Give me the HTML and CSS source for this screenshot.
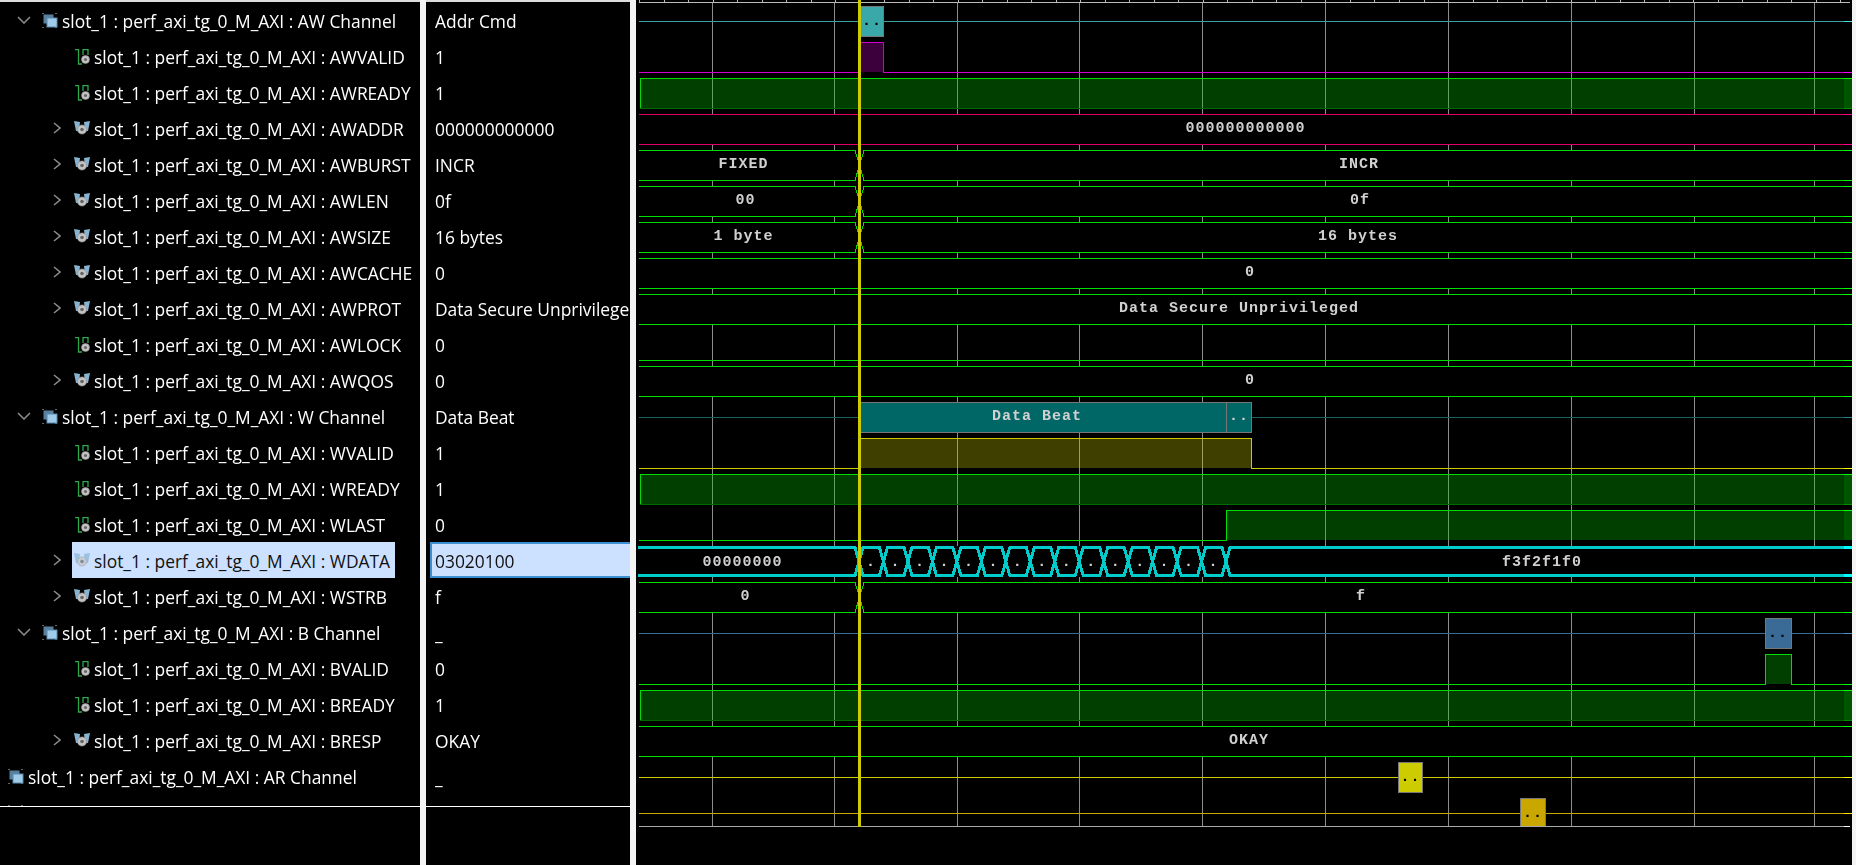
FILE: index.html

```html
<!DOCTYPE html>
<html>
<head>
    <meta charset="UTF-8">
    <title>Waveform - perf_axi_tg_0_M_AXI</title>
    <link rel="stylesheet" href="styles.css">
</head>
<body>
    <!-- icons used by the tree -->
    <svg class="defs">
        <symbol id="i-group" viewBox="0 0 16 16">
            <path class="i-dots" d="M0 0h2v1h-2zM13 0h2v1h-2zM0 14h2v1h-2zM13 14h2v1h-2z"/>
            <rect class="i-back" x="1.5" y="1.5" width="10" height="9"/>
            <rect class="i-front" x="5" y="5" width="10" height="9"/>
        </symbol>
        <symbol id="i-bit" viewBox="0 0 16 16">
            <path class="i-step" d="M1 .5H4.5V15H8M9 6V.5H14V6"/>
            <circle class="i-ring" cx="11.5" cy="10.5" r="4"/>
            <circle class="i-hole" cx="11.5" cy="10.5" r="1.6"/>
        </symbol>
        <symbol id="i-bus" viewBox="0 0 16 16">
            <path class="i-wing" d="M0 0L6 1L5 10L2 10ZM16 0L10 1L11 10L14 10Z"/>
            <circle class="i-ring" cx="8" cy="8.5" r="4.6"/>
            <circle class="i-hole" cx="8" cy="8.5" r="1.8"/>
        </symbol>
        <symbol id="i-right" viewBox="0 0 8 12">
            <path class="i-chev" d="M1 1L7 6L1 11"/>
        </symbol>
        <symbol id="i-down" viewBox="0 0 14 8">
            <path class="i-chev" d="M1 1L7 7L13 1"/>
        </symbol>
    </svg>

    <div class="names">
        <div class="row group"><span class="twisty"><svg class="chev-down"><use href="#i-down"/></svg></span><span class="node"><svg class="ico"><use href="#i-group"/></svg><span>slot_1 : perf_axi_tg_0_M_AXI : AW Channel</span></span></div>
        <div class="row child"><span class="twisty"></span><span class="node"><svg class="ico"><use href="#i-bit"/></svg><span>slot_1 : perf_axi_tg_0_M_AXI : AWVALID</span></span></div>
        <div class="row child"><span class="twisty"></span><span class="node"><svg class="ico"><use href="#i-bit"/></svg><span>slot_1 : perf_axi_tg_0_M_AXI : AWREADY</span></span></div>
        <div class="row child"><span class="twisty"><svg class="chev-right"><use href="#i-right"/></svg></span><span class="node"><svg class="ico"><use href="#i-bus"/></svg><span>slot_1 : perf_axi_tg_0_M_AXI : AWADDR</span></span></div>
        <div class="row child"><span class="twisty"><svg class="chev-right"><use href="#i-right"/></svg></span><span class="node"><svg class="ico"><use href="#i-bus"/></svg><span>slot_1 : perf_axi_tg_0_M_AXI : AWBURST</span></span></div>
        <div class="row child"><span class="twisty"><svg class="chev-right"><use href="#i-right"/></svg></span><span class="node"><svg class="ico"><use href="#i-bus"/></svg><span>slot_1 : perf_axi_tg_0_M_AXI : AWLEN</span></span></div>
        <div class="row child"><span class="twisty"><svg class="chev-right"><use href="#i-right"/></svg></span><span class="node"><svg class="ico"><use href="#i-bus"/></svg><span>slot_1 : perf_axi_tg_0_M_AXI : AWSIZE</span></span></div>
        <div class="row child"><span class="twisty"><svg class="chev-right"><use href="#i-right"/></svg></span><span class="node"><svg class="ico"><use href="#i-bus"/></svg><span>slot_1 : perf_axi_tg_0_M_AXI : AWCACHE</span></span></div>
        <div class="row child"><span class="twisty"><svg class="chev-right"><use href="#i-right"/></svg></span><span class="node"><svg class="ico"><use href="#i-bus"/></svg><span>slot_1 : perf_axi_tg_0_M_AXI : AWPROT</span></span></div>
        <div class="row child"><span class="twisty"></span><span class="node"><svg class="ico"><use href="#i-bit"/></svg><span>slot_1 : perf_axi_tg_0_M_AXI : AWLOCK</span></span></div>
        <div class="row child"><span class="twisty"><svg class="chev-right"><use href="#i-right"/></svg></span><span class="node"><svg class="ico"><use href="#i-bus"/></svg><span>slot_1 : perf_axi_tg_0_M_AXI : AWQOS</span></span></div>
        <div class="row group"><span class="twisty"><svg class="chev-down"><use href="#i-down"/></svg></span><span class="node"><svg class="ico"><use href="#i-group"/></svg><span>slot_1 : perf_axi_tg_0_M_AXI : W Channel</span></span></div>
        <div class="row child"><span class="twisty"></span><span class="node"><svg class="ico"><use href="#i-bit"/></svg><span>slot_1 : perf_axi_tg_0_M_AXI : WVALID</span></span></div>
        <div class="row child"><span class="twisty"></span><span class="node"><svg class="ico"><use href="#i-bit"/></svg><span>slot_1 : perf_axi_tg_0_M_AXI : WREADY</span></span></div>
        <div class="row child"><span class="twisty"></span><span class="node"><svg class="ico"><use href="#i-bit"/></svg><span>slot_1 : perf_axi_tg_0_M_AXI : WLAST</span></span></div>
        <div class="row child selected"><span class="twisty"><svg class="chev-right"><use href="#i-right"/></svg></span><span class="node"><svg class="ico"><use href="#i-bus"/></svg><span>slot_1 : perf_axi_tg_0_M_AXI : WDATA</span></span></div>
        <div class="row child"><span class="twisty"><svg class="chev-right"><use href="#i-right"/></svg></span><span class="node"><svg class="ico"><use href="#i-bus"/></svg><span>slot_1 : perf_axi_tg_0_M_AXI : WSTRB</span></span></div>
        <div class="row group"><span class="twisty"><svg class="chev-down"><use href="#i-down"/></svg></span><span class="node"><svg class="ico"><use href="#i-group"/></svg><span>slot_1 : perf_axi_tg_0_M_AXI : B Channel</span></span></div>
        <div class="row child"><span class="twisty"></span><span class="node"><svg class="ico"><use href="#i-bit"/></svg><span>slot_1 : perf_axi_tg_0_M_AXI : BVALID</span></span></div>
        <div class="row child"><span class="twisty"></span><span class="node"><svg class="ico"><use href="#i-bit"/></svg><span>slot_1 : perf_axi_tg_0_M_AXI : BREADY</span></span></div>
        <div class="row child"><span class="twisty"><svg class="chev-right"><use href="#i-right"/></svg></span><span class="node"><svg class="ico"><use href="#i-bus"/></svg><span>slot_1 : perf_axi_tg_0_M_AXI : BRESP</span></span></div>
        <div class="row root"><span class="node"><svg class="ico"><use href="#i-group"/></svg><span>slot_1 : perf_axi_tg_0_M_AXI : AR Channel</span></span></div>
        <div class="row root"><span class="node"><svg class="ico"><use href="#i-group"/></svg></span></div>
    </div>

    <div class="values">
        <div class="val">Addr Cmd</div>
        <div class="val">1</div>
        <div class="val">1</div>
        <div class="val">000000000000</div>
        <div class="val">INCR</div>
        <div class="val">0f</div>
        <div class="val">16 bytes</div>
        <div class="val">0</div>
        <div class="val">Data Secure Unprivileged</div>
        <div class="val">0</div>
        <div class="val">0</div>
        <div class="val">Data Beat</div>
        <div class="val">1</div>
        <div class="val">1</div>
        <div class="val">0</div>
        <div class="val selected">03020100</div>
        <div class="val">f</div>
        <div class="val">_</div>
        <div class="val">0</div>
        <div class="val">1</div>
        <div class="val">OKAY</div>
        <div class="val">_</div>
    </div>

    <!-- waveform canvas, viewBox uses page x coordinates -->
    <svg class="wave" viewBox="636 0 1216 865">
        <defs>
            <path id="busx" d="M639 .5H855L858 10M861 10L864 .5H1852M639 30.5H855L858 20M861 20L864 30.5H1852"/>
            <path id="xseg" d="M859 561.5L863 547.5H879.5L883.5 561.5L879.5 575.5H863Z"/>
        </defs>

        <!-- ruler -->
        <path class="ruler" d="M639 2.5H1850"/>
        <path class="ruler" d="M639.5 0V2M664.5 0V2M688.5 0V2M713.5 0V2M737.5 0V2M762.5 0V2M786.5 0V2M811.5 0V2M835.5 0V2M860.5 0V2M884.5 0V2M909.5 0V2M933.5 0V2M958.5 0V2M982.5 0V2M1007.5 0V2M1031.5 0V2M1056.5 0V2M1080.5 0V2M1105.5 0V2M1129.5 0V2M1154.5 0V2M1178.5 0V2M1203.5 0V2M1227.5 0V2M1252.5 0V2M1276.5 0V2M1301.5 0V2M1325.5 0V2M1350.5 0V2M1374.5 0V2M1399.5 0V2M1424.5 0V2M1448.5 0V2M1473.5 0V2M1497.5 0V2M1522.5 0V2M1546.5 0V2M1571.5 0V2M1595.5 0V2M1620.5 0V2M1644.5 0V2M1669.5 0V2M1693.5 0V2M1718.5 0V2M1742.5 0V2M1767.5 0V2M1791.5 0V2M1816.5 0V2M1840.5 0V2"/>

        <!-- grid -->
        <path class="grid" d="M712.5 3V826M834.5 3V826M957.5 3V826M1079.5 3V826M1202.5 3V826M1325.5 3V826M1448.5 3V826M1571.5 3V826M1694.5 3V826M1814.5 3V826"/>

        <!-- bus rows hide the grid -->
        <rect class="mask" x="639" y="114" width="1213" height="31"/>
        <rect class="mask" x="639" y="150" width="1213" height="31"/>
        <rect class="mask" x="639" y="186" width="1213" height="31"/>
        <rect class="mask" x="639" y="222" width="1213" height="31"/>
        <rect class="mask" x="639" y="258" width="1213" height="31"/>
        <rect class="mask" x="639" y="294" width="1213" height="31"/>
        <rect class="mask" x="639" y="366" width="1213" height="31"/>
        <rect class="mask" x="639" y="546" width="1213" height="31"/>
        <rect class="mask" x="639" y="582" width="1213" height="31"/>
        <rect class="mask" x="639" y="726" width="1213" height="31"/>

        <!-- AW channel -->
        <path class="ln-teal" d="M639 21.5H1852"/>
        <rect class="tx tx-teal" x="860.5" y="6.5" width="23" height="30"/>
        <text class="dots" x="872" y="25">..</text>
        <path class="sig-magenta" d="M639 72.5H860.5V42.5H883.5V72.5H1852"/>
        <rect class="fill-magenta" x="861" y="43" width="22" height="29"/>
        <rect class="fill-green" x="640" y="79" width="1212" height="29"/>
        <path class="sig-green-dim" d="M640 108.5H1852"/>
        <path class="sig-green" d="M640 108V78.5H1852"/>
        <path class="sig-pink" d="M639 114.5H1852M639 144.5H1852"/>
        <text class="val-txt" x="1245.5" y="132">000000000000</text>
        <use class="sig-green" href="#busx" y="150"/>
        <text class="val-txt" x="743.5" y="168">FIXED</text>
        <text class="val-txt" x="1359" y="168">INCR</text>
        <use class="sig-green" href="#busx" y="186"/>
        <text class="val-txt" x="745.5" y="204">00</text>
        <text class="val-txt" x="1360" y="204">0f</text>
        <use class="sig-green" href="#busx" y="222"/>
        <text class="val-txt" x="743.5" y="240">1 byte</text>
        <text class="val-txt" x="1358" y="240">16 bytes</text>
        <path class="sig-green" d="M639 258.5H1852M639 288.5H1852"/>
        <text class="val-txt" x="1250" y="276">0</text>
        <path class="sig-green" d="M639 294.5H1852M639 324.5H1852"/>
        <text class="val-txt" x="1239" y="312">Data Secure Unprivileged</text>
        <path class="sig-green" d="M639 360.5H1852"/>
        <path class="sig-green" d="M639 366.5H1852M639 396.5H1852"/>
        <text class="val-txt" x="1250" y="384">0</text>

        <!-- W channel -->
        <path class="ln-teal-dim" d="M639 417.5H1852"/>
        <rect class="tx tx-beat" x="860.5" y="402.5" width="391" height="30"/>
        <path class="tx-div" d="M1226.5 402.5V432.5"/>
        <text class="val-txt" x="1037" y="420">Data Beat</text>
        <text class="val-txt" x="1239" y="420">..</text>
        <rect class="fill-olive" x="861" y="439" width="390" height="29"/>
        <path class="sig-olive" d="M639 468.5H860.5V438.5H1251.5V468.5H1852"/>
        <rect class="fill-green" x="640" y="475" width="1212" height="29"/>
        <path class="sig-green-dim" d="M640 504.5H1852"/>
        <path class="sig-green" d="M640 504V474.5H1852"/>
        <rect class="fill-green" x="1227" y="511" width="625" height="29"/>
        <path class="sig-green" d="M639 540.5H1226.5V510.5H1852"/>

        <!-- WDATA -->
        <path class="bus-cyan" d="M638 547.5H855L859 561.5L855 575.5H638M1226 561.5L1230 547.5H1852M1226 561.5L1230 575.5H1852"/>
        <use class="bus-cyan" href="#xseg"/>
        <use class="bus-cyan" href="#xseg" x="24.47"/>
        <use class="bus-cyan" href="#xseg" x="48.93"/>
        <use class="bus-cyan" href="#xseg" x="73.4"/>
        <use class="bus-cyan" href="#xseg" x="97.87"/>
        <use class="bus-cyan" href="#xseg" x="122.33"/>
        <use class="bus-cyan" href="#xseg" x="146.8"/>
        <use class="bus-cyan" href="#xseg" x="171.27"/>
        <use class="bus-cyan" href="#xseg" x="195.73"/>
        <use class="bus-cyan" href="#xseg" x="220.2"/>
        <use class="bus-cyan" href="#xseg" x="244.67"/>
        <use class="bus-cyan" href="#xseg" x="269.13"/>
        <use class="bus-cyan" href="#xseg" x="293.6"/>
        <use class="bus-cyan" href="#xseg" x="318.07"/>
        <use class="bus-cyan" href="#xseg" x="342.53"/>
        <text class="val-txt" x="742.5" y="566">00000000</text>
        <text class="val-txt" x="1542" y="566">f3f2f1f0</text>
        <text class="beats" x="866 890.5 915 939.4 963.9 988.4 1012.8 1037.3 1061.8 1086.2 1110.7 1135.2 1159.6 1184.1 1208.6" y="566">...............</text>
        <use class="sig-green" href="#busx" y="582"/>
        <text class="val-txt" x="745.5" y="600">0</text>
        <text class="val-txt" x="1361" y="600">f</text>

        <!-- B channel -->
        <path class="ln-blue" d="M639 633.5H1852"/>
        <rect class="tx tx-blue" x="1765.5" y="618.5" width="26" height="30"/>
        <text class="dots" x="1778" y="637">..</text>
        <rect class="fill-green" x="1766" y="655" width="25" height="29"/>
        <path class="sig-green" d="M639 684.5H1765.5V654.5H1791.5V684.5H1852"/>
        <rect class="fill-green" x="640" y="691" width="1212" height="29"/>
        <path class="sig-green-dim" d="M640 720.5H1852"/>
        <path class="sig-green" d="M640 720V690.5H1852"/>
        <path class="sig-green" d="M639 726.5H1852M639 756.5H1852"/>
        <text class="val-txt" x="1249" y="744">OKAY</text>

        <!-- AR channel -->
        <path class="ln-yellow" d="M639 777.5H1852"/>
        <rect class="tx tx-yellow" x="1398.5" y="762.5" width="24" height="30"/>
        <text class="dots" x="1410.5" y="781">..</text>
        <path class="ln-gold" d="M639 813.5H1852"/>
        <rect class="tx tx-gold" x="1520.5" y="798.5" width="25" height="28"/>
        <text class="dots" x="1533" y="817">..</text>
        <path class="floor" d="M639 826.5H1844"/>
        <path class="floor-end" d="M1844 826.5H1850"/>

        <!-- brighter strip at the window end -->
        <rect class="edge" x="1844" y="3" width="8" height="823"/>

        <!-- cursor -->
        <rect class="cursor" x="858" y="0" width="3" height="827"/>
    </svg>
</body>
</html>
```

FILE: styles.css

```css
html, body {
    margin: 0;
    height: 865px;
    overflow: hidden;
}

body {
    display: grid;
    grid-template-columns: 420px 204px 1216px;
    column-gap: 6px;
    background-color: #f4f4f4;
    font-family: "Open Sans", "Noto Sans", sans-serif;
    font-size: 17.4px;
    color: #fff;
}

.defs {
    position: absolute;
    width: 0;
    height: 0;
}

/* tree and value columns */
.names, .values {
    background-color: #000;
    height: 865px;
    box-sizing: border-box;
    border-top: 2px solid #ddd;
    position: relative;
    overflow: hidden;
}

.names::after, .values::after {
    content: "";
    display: block;
    position: absolute;
    left: 0;
    right: 0;
    top: 804px;
    height: 59px;
    background-color: #000;
    border-top: 1px solid #fff;
}

.row, .val {
    height: 36px;
    box-sizing: border-box;
    padding-top: 2px;
    white-space: nowrap;
}

.row {
    display: flex;
    align-items: center;
}

.group { padding-left: 16px; }
.child { padding-left: 48px; }
.root { padding-left: 6px; }

.twisty {
    width: 24px;
    flex: none;
    display: flex;
    align-items: center;
}

.chev-down {
    width: 14px;
    height: 8px;
    margin-left: 1px;
    margin-top: -2px;
}

.chev-right {
    width: 8px;
    height: 12px;
    margin-left: 5px;
    margin-top: -2px;
}

.node {
    display: flex;
    align-items: center;
    gap: 4px;
    padding: 0 5px 0 2px;
    height: 34px;
}

.ico {
    width: 16px;
    height: 16px;
    flex: none;
}

.row.selected .node {
    background-color: #cce0ff;
    color: #111;
    height: 36px;
    margin-top: -2px;
    padding-top: 2px;
    box-sizing: border-box;
}

.row.selected .ico { opacity: .7; }

.val {
    padding-left: 9px;
    line-height: 34px;
    overflow: hidden;
}

.val.selected {
    margin-left: 4px;
    padding: 1px 0 0 3px;
    border: 2px solid #3c8fd0;
    border-right: 0;
    background-color: #cce0ff;
    color: #111;
    line-height: 32px;
}

/* icons */
.i-dots { fill: #666; }
.i-back { fill: #58809e; }
.i-front { fill: #9fcbe8; stroke: #5a8ab0; stroke-width: 1; }
.i-step { fill: none; stroke: #2fa84a; stroke-width: 1.3; }
.i-wing { fill: #86b4d2; }
.i-ring { fill: #c4c4c4; stroke: #8a8a8a; stroke-width: .6; }
.i-hole { fill: #666; }
.i-chev { fill: none; stroke: #8a8a8a; stroke-width: 1.6; }

/* waveform */
.wave {
    display: block;
    width: 1216px;
    height: 865px;
    background-color: #000;
}

.ruler, .grid, .mask, .wave path, .wave rect, .wave use {
    shape-rendering: crispEdges;
}

.ruler { fill: none; stroke: #bbb; stroke-width: 1; }
.grid { fill: none; stroke: #8c8c8c; stroke-width: 1; }
.mask { fill: #000; }

.sig-green, .sig-green-dim, .sig-magenta, .sig-pink, .sig-olive,
.ln-teal, .ln-teal-dim, .ln-blue, .ln-yellow, .ln-gold,
.floor, .floor-end, .bus-cyan {
    fill: none;
    stroke-width: 1;
}

.sig-green { stroke: #00dd00; }
.sig-green-dim { stroke: #006a00; }
.sig-magenta { stroke: #d000d0; }
.sig-pink { stroke: #e00064; }
.sig-olive { stroke: #cccc00; }
.ln-teal { stroke: #3aa0a0; }
.ln-teal-dim { stroke: #1b5f5f; }
.ln-blue { stroke: #3a6a96; }
.ln-yellow { stroke: #cccc00; }
.ln-gold { stroke: #c9a600; }
.floor { stroke: #aaa; }
.floor-end { stroke: #fff; }
.bus-cyan { stroke: #00cccc; stroke-width: 3; shape-rendering: auto; }

.fill-green { fill: rgba(0, 204, 0, .31); }
.fill-magenta { fill: #3c003c; }
.fill-olive { fill: rgba(204, 204, 0, .31); }

.tx { stroke: #777; stroke-width: 1; }
.tx-teal { fill: #3aa8a8; }
.tx-beat { fill: #006666; }
.tx-blue { fill: #3a6a96; }
.tx-yellow { fill: #cccc00; }
.tx-gold { fill: #c9a600; }
.tx-div { stroke: #777; stroke-width: 1; }

.edge { fill: #444; mix-blend-mode: color-dodge; }

.val-txt, .dots, .beats {
    font-family: "Liberation Mono", monospace;
    font-weight: bold;
    font-size: 15px;
    letter-spacing: 1px;
}

.val-txt { fill: #d0d0d0; text-anchor: middle; }
.dots { fill: #000; text-anchor: middle; }
.beats { fill: #d0d0d0; letter-spacing: 0; }

.cursor { fill: #cccc00; }
```
